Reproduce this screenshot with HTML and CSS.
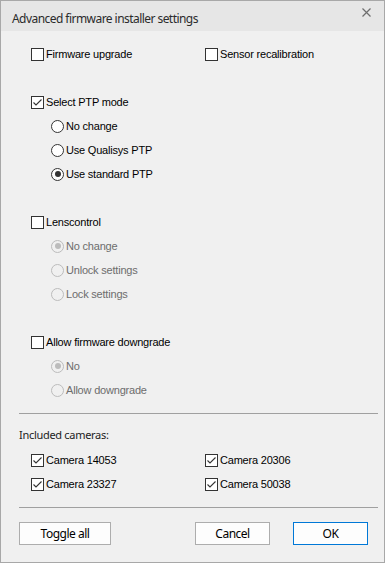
FILE: index.html
```html
<!DOCTYPE html>
<html>
<head>
  <title>Advanced firmware installer settings</title>
  <link rel="stylesheet" href="styles.css">
</head>
<body>
  <div class="window">
    <div class="titlebar">
      <span class="title">Advanced firmware installer settings</span>
      <svg class="close" width="9" height="9" viewBox="0 0 9 9">
        <path d="M0.5 0.5 L8.5 8.5 M8.5 0.5 L0.5 8.5" stroke="#6e6e6e" stroke-width="1.2" fill="none"/>
      </svg>
    </div>

    <div class="content">
      <div class="group cols">
        <label class="check"><span class="box"></span>Firmware upgrade</label>
        <label class="check"><span class="box"></span>Sensor recalibration</label>
      </div>

      <div class="group">
        <label class="check"><span class="box checked"><svg viewBox="0 0 11 11"><path d="M1.5 5.5 L4 8 L9.5 2.5" stroke="#333" stroke-width="1.1" fill="none"/></svg></span>Select PTP mode</label>
        <label class="radio"><span class="dot"></span>No change</label>
        <label class="radio"><span class="dot"></span>Use Qualisys PTP</label>
        <label class="radio"><span class="dot on"></span>Use standard PTP</label>
      </div>

      <div class="group">
        <label class="check"><span class="box"></span>Lenscontrol</label>
        <label class="radio disabled"><span class="dot on"></span>No change</label>
        <label class="radio disabled"><span class="dot"></span>Unlock settings</label>
        <label class="radio disabled"><span class="dot"></span>Lock settings</label>
      </div>

      <div class="group">
        <label class="check"><span class="box"></span>Allow firmware downgrade</label>
        <label class="radio disabled"><span class="dot on"></span>No</label>
        <label class="radio disabled"><span class="dot"></span>Allow downgrade</label>
      </div>

      <hr class="separator">

      <div class="cameras-title">Included cameras:</div>
      <div class="cameras cols">
        <label class="check"><span class="box checked"><svg viewBox="0 0 11 11"><path d="M1.5 5.5 L4 8 L9.5 2.5" stroke="#333" stroke-width="1.1" fill="none"/></svg></span>Camera 14053</label>
        <label class="check"><span class="box checked"><svg viewBox="0 0 11 11"><path d="M1.5 5.5 L4 8 L9.5 2.5" stroke="#333" stroke-width="1.1" fill="none"/></svg></span>Camera 20306</label>
        <label class="check"><span class="box checked"><svg viewBox="0 0 11 11"><path d="M1.5 5.5 L4 8 L9.5 2.5" stroke="#333" stroke-width="1.1" fill="none"/></svg></span>Camera 23327</label>
        <label class="check"><span class="box checked"><svg viewBox="0 0 11 11"><path d="M1.5 5.5 L4 8 L9.5 2.5" stroke="#333" stroke-width="1.1" fill="none"/></svg></span>Camera 50038</label>
      </div>

      <hr class="separator bottom">

      <div class="buttons">
        <button class="btn toggle">Toggle all</button>
        <div class="spacer"></div>
        <button class="btn">Cancel</button>
        <button class="btn default">OK</button>
      </div>
    </div>
  </div>
</body>
</html>
```

FILE: styles.css
```css
* {
  margin: 0;
  padding: 0;
  box-sizing: border-box;
}

body {
  background: #f0f0f0;
}

.window {
  width: 385px;
  height: 563px;
  border: 1px solid #a8a8a8;
  background: #f0f0f0;
  display: flex;
  flex-direction: column;
}

.titlebar {
  height: 30px;
  background: #e6e6e6;
  display: flex;
  align-items: flex-start;
  justify-content: space-between;
  padding: 0 13px 0 11px;
}

.title {
  font-family: "Noto Sans", sans-serif;
  font-size: 12px;
  line-height: 16px;
  letter-spacing: -0.55px;
  color: #2b2b2b;
  margin-top: 10px;
}

.close {
  display: block;
  margin-top: 7px;
}

.content {
  padding: 11px 6px 0 18px;
  font-family: "Liberation Sans", Arial, sans-serif;
  font-size: 11px;
  letter-spacing: -0.2px;
  color: #000;
}

.group {
  margin-bottom: 24px;
}

.cols {
  display: grid;
  grid-template-columns: 174px 1fr;
}

.check,
.radio {
  display: flex;
  align-items: center;
  height: 24px;
  padding-left: 12px;
}

.radio {
  padding-left: 32px;
}

.box {
  width: 13px;
  height: 13px;
  border: 1px solid #333;
  background: #fff;
  margin-right: 2px;
  display: flex;
}

.box svg {
  width: 11px;
  height: 11px;
}

.dot {
  width: 13px;
  height: 13px;
  border: 1px solid #333;
  border-radius: 50%;
  background: #fff;
  margin-right: 2px;
  display: flex;
  align-items: center;
  justify-content: center;
}

.dot.on::after {
  content: '';
  width: 6px;
  height: 6px;
  border-radius: 50%;
  background: #333;
}

.radio.disabled {
  color: #6d6d6d;
}

.radio.disabled .dot {
  border-color: #bcbcbc;
  background: #f0f0f0;
}

.radio.disabled .dot.on::after {
  background: #bcbcbc;
}

.separator {
  border: none;
  border-top: 1px solid #a0a0a0;
  width: 359px;
  margin-top: -13px;
}

.separator.bottom {
  margin-top: 0;
}

.cameras-title {
  font-family: "Noto Sans", sans-serif;
  font-size: 11px;
  letter-spacing: -0.3px;
  color: #222;
  height: 24px;
  line-height: 24px;
  margin-top: 9px;
}

.cameras {
  margin-top: 1px;
  margin-bottom: 11px;
}

.buttons {
  display: flex;
  margin-top: 14px;
  width: 349px;
}

.spacer {
  flex: 1;
}

.btn {
  font-family: "Noto Sans", sans-serif;
  font-size: 12px;
  letter-spacing: -0.5px;
  color: #000;
  background: #fdfdfd;
  border: 1px solid #adadad;
  height: 23px;
  width: 75px;
}

.btn.toggle {
  width: 92px;
}

.btn.default {
  border-color: #0078d7;
  margin-left: 23px;
}
```
